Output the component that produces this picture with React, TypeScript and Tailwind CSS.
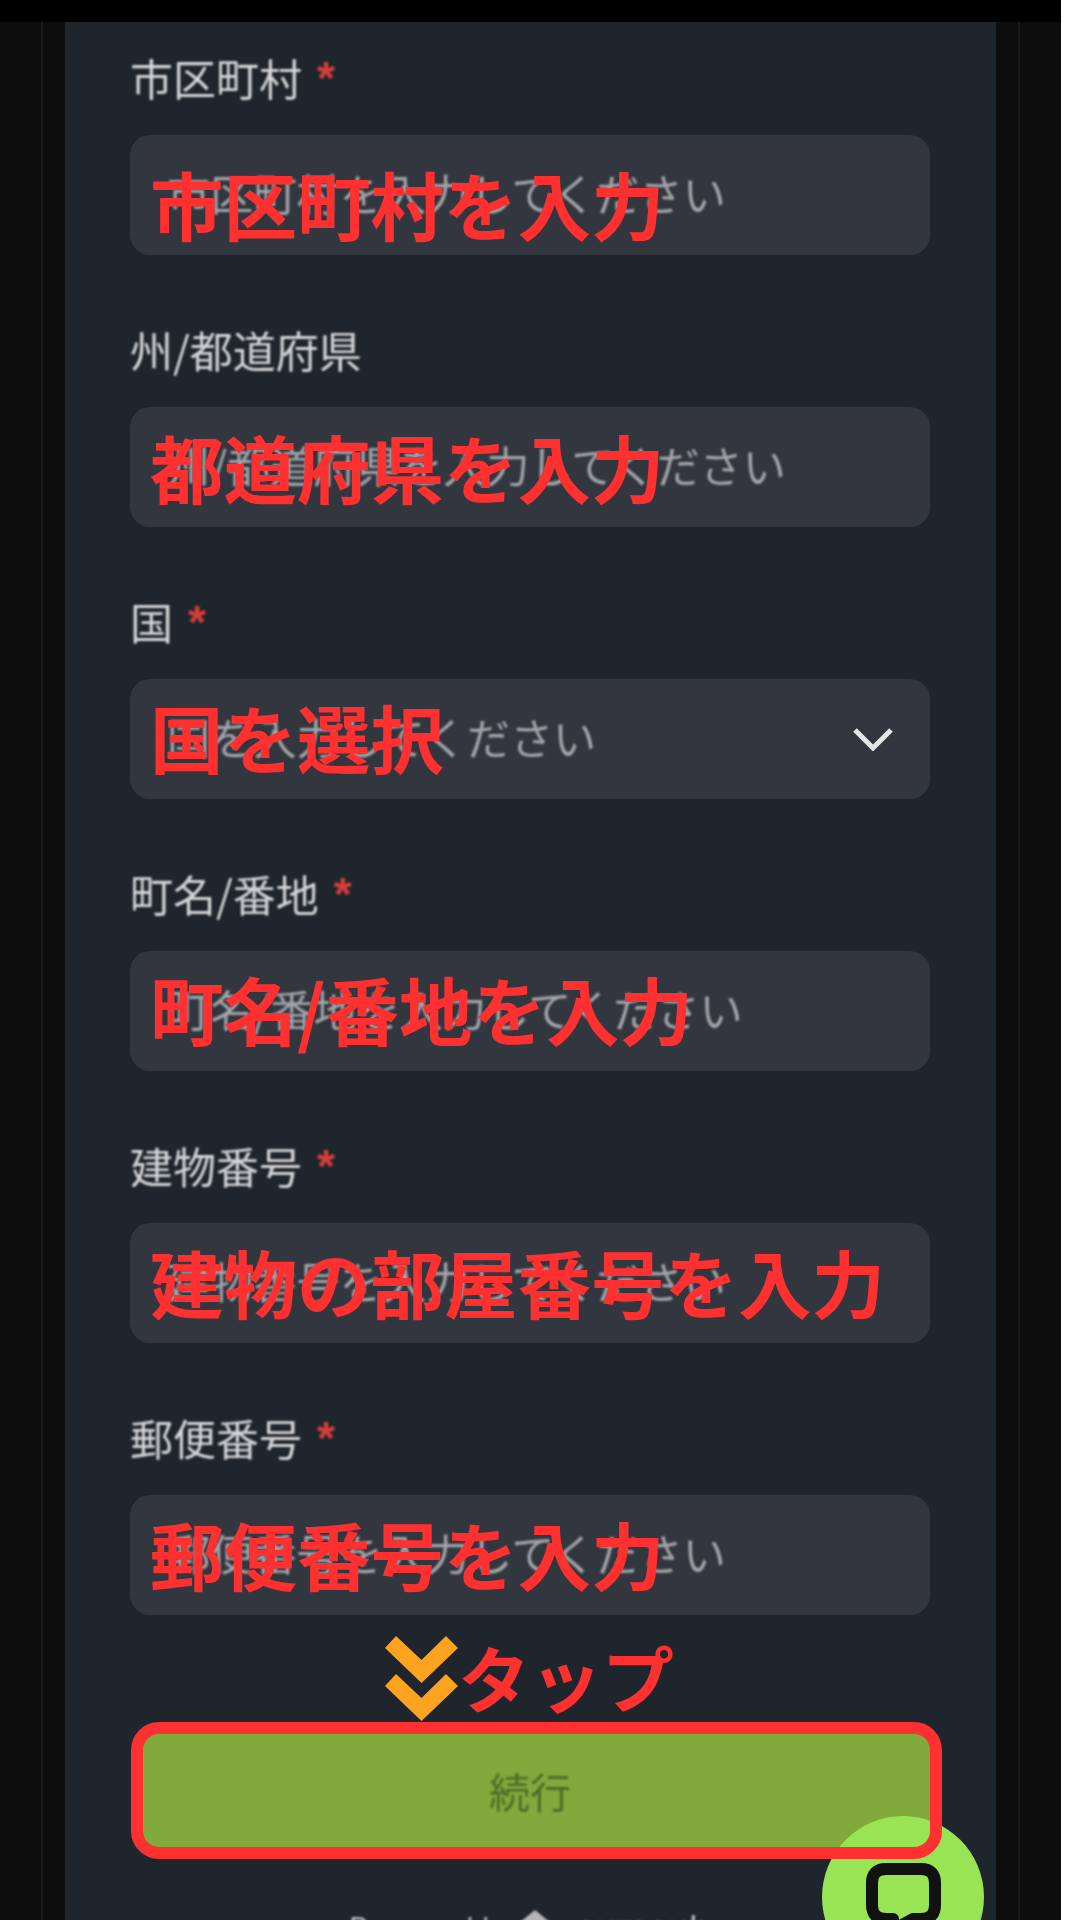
const FIELDS = [
  {
    label: "市区町村",
    required: true,
    placeholder: "市区町村を入力してください",
    note: "市区町村を入力",
    noteClass: "top-[32px]",
  },
  {
    label: "州/都道府県",
    required: false,
    placeholder: "州/都道府県を入力してください",
    note: "都道府県を入力",
    noteClass: "top-[23px]",
  },
  {
    label: "国",
    required: true,
    placeholder: "国を入力してください",
    note: "国を選択",
    noteClass: "top-[21px]",
    select: true,
  },
  {
    label: "町名/番地",
    required: true,
    placeholder: "町名/番地を入力してください",
    note: "町名/番地を入力",
    noteClass: "top-[21px]",
  },
  {
    label: "建物番号",
    required: true,
    placeholder: "建物番号を入力してください",
    note: "建物の部屋番号を入力",
    noteClass: "top-[22px]",
  },
  {
    label: "郵便番号",
    required: true,
    placeholder: "郵便番号を入力してください",
    note: "郵便番号を入力",
    noteClass: "top-[22px]",
  },
];

type FieldProps = {
  label: string;
  required: boolean;
  placeholder: string;
  note: string;
  noteClass: string;
  select?: boolean;
};

function Field({ label, required, placeholder, note, noteClass, select }: FieldProps) {
  return (
    <div className="flex flex-col">
      {/* Label */}
      <div className="flex items-center gap-[15px] h-[56px] mb-[29px] text-[43px] leading-none text-[#d4d6d8] blur-[0.8px]">
        <span className="-mt-[1px]">{label}</span>
        {required && (
          <span className="text-[#d83e3b] text-[46px] font-bold font-['Liberation_Sans',sans-serif]">*</span>
        )}
      </div>

      {/* Input */}
      <div className="relative flex items-center justify-between h-[120px] rounded-[20px] bg-[#32363e] pl-[37px] pr-[37px]">
        <span className="-mt-[5px] text-[43.2px] leading-none text-[#a2a5a9] whitespace-nowrap blur-[0.8px]">
          {placeholder}
        </span>
        {select && (
          <svg width="40" height="24" viewBox="0 0 40 24" fill="none" className="blur-[0.3px]">
            <path d="M2 3 L20 21 L38 3" stroke="#e4e5e6" strokeWidth="5" />
          </svg>
        )}

        {/* Red annotation */}
        <span
          className={`absolute left-[20px] ${noteClass} text-[73.5px] leading-none font-bold text-[#fe3030] whitespace-nowrap`}
        >
          {note}
        </span>
      </div>
    </div>
  );
}

export default function App() {
  return (
    <div className="relative w-[1080px] h-[1920px] overflow-hidden bg-white font-['Noto_Sans_CJK_JP',sans-serif]">
      <div className="flex flex-col w-[1061px] h-full bg-[#0d0d0d]">
        <div className="h-[22px] shrink-0 bg-black" />

        <div className="flex flex-1 min-h-0">
          <div className="w-[43px] shrink-0 border-r-2 border-[#1b1b1b]" />
          <div className="w-[22px] shrink-0" />

          {/* Form panel */}
          <div className="w-[931px] shrink-0 pl-[65px] pr-[66px] pt-[28px] bg-[#1e252c]">
            <div className="flex flex-col gap-[67px]">
              {FIELDS.map((f) => (
                <Field key={f.label} {...f} />
              ))}
            </div>

            {/* Continue button */}
            <div className="relative mt-[112px] ml-[8px] flex items-center justify-center h-[120px] rounded-[20px] bg-[#82a93c]">
              <span className="-ml-[8px] mt-[6px] text-[41px] leading-none text-[#4e6d28] blur-[0.8px]">続行</span>
              <div className="absolute z-20 -left-[7px] -right-[12px] -top-[5px] -bottom-[12px] rounded-[28px] border-[12px] border-[#fe3030]" />
            </div>

            {/* Footer */}
            <div className="mt-[57px] flex items-center justify-center gap-[8px] text-[#b4b6b9] leading-[48px] blur-[0.8px] font-['Inter',sans-serif]">
              <span className="text-[30px]">Powered by</span>
              <svg width="44" height="36" viewBox="0 0 44 36" className="-ml-[12px] mr-[12px]">
                <path d="M22 0 L44 18 L44 36 L0 36 L0 18 Z" fill="#b4b6b9" />
              </svg>
              <span className="text-[36px]">sumsub</span>
            </div>
          </div>

          <div className="w-[22px] shrink-0" />
          <div className="w-[2px] shrink-0 bg-[#1b1b1b]" />
        </div>
      </div>

      {/* Tap hint */}
      <svg
        width="74"
        height="86"
        viewBox="385 1636 74 86"
        className="absolute z-20 left-[385px] top-[1636px]"
      >
        <path d="M385 1648 L396 1636 L421.5 1660 L446 1636 L458 1648 L421.5 1683 Z" fill="#fca31f" />
        <path d="M385 1686 L396 1674 L421.5 1698 L446 1674 L458 1686 L421.5 1721 Z" fill="#fca31f" />
      </svg>
      <span className="absolute z-20 left-[458px] top-[1640px] text-[72px] leading-none font-bold text-[#fe3030] whitespace-nowrap">
        タップ
      </span>

      {/* Chat bubble */}
      <div className="absolute z-10 left-[822px] top-[1816px] w-[162px] h-[162px] rounded-full bg-[#98e454]">
        <svg width="90" height="80" viewBox="860 1857 90 80" className="absolute left-[38px] top-[41px]" fill="none">
          <path
            d="M886 1869 H921 Q935 1869 935 1883 V1905 Q935 1919 921 1919 H913 L893 1930 V1919 H886 Q872 1919 872 1905 V1883 Q872 1869 886 1869 Z"
            stroke="#111111"
            strokeWidth="12"
            strokeLinejoin="round"
          />
        </svg>
      </div>
    </div>
  );
}
